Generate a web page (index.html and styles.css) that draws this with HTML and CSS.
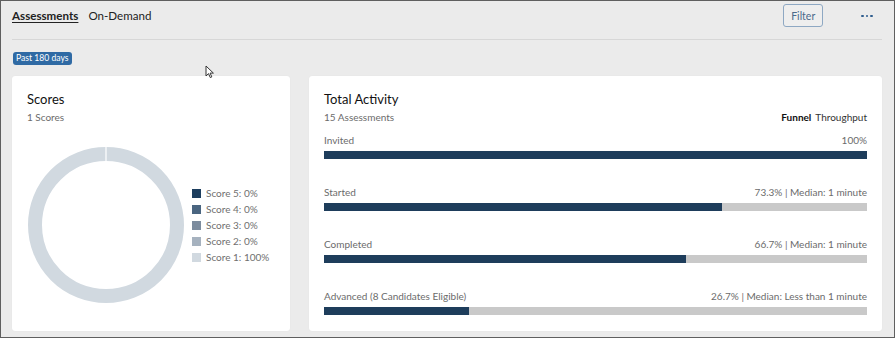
FILE: index.html
```html
<!DOCTYPE html>
<html lang="en">
<head>
  <meta charset="UTF-8">
  <title>Assessments</title>
  <link rel="stylesheet" href="styles.css">
</head>
<body>
  <div class="page">
    <div class="topbar">
      <nav class="tabs">
        <a href="#" class="tab active">Assessments</a>
        <a href="#" class="tab">On-Demand</a>
      </nav>
      <div class="actions">
        <button class="btn-filter">Filter</button>
        <button class="btn-more" aria-label="More">
          <span></span><span></span><span></span>
        </button>
      </div>
    </div>

    <div class="range">
      <span class="badge">Past 180 days</span>
    </div>

    <div class="cards">
      <section class="card">
        <h2 class="card-title">Scores</h2>
        <p class="card-sub">1 Scores</p>
        <div class="scores">
          <svg class="donut" width="156" height="156" viewBox="0 0 156 156">
            <circle cx="78" cy="78" r="71" fill="none" stroke="#d1d9e0" stroke-width="14"/>
            <line x1="78" y1="0" x2="78" y2="15" stroke="#fff" stroke-width="1.2"/>
          </svg>
          <ul class="legend">
            <li><i class="sw s5"></i>Score 5: 0%</li>
            <li><i class="sw s4"></i>Score 4: 0%</li>
            <li><i class="sw s3"></i>Score 3: 0%</li>
            <li><i class="sw s2"></i>Score 2: 0%</li>
            <li><i class="sw s1"></i>Score 1: 100%</li>
          </ul>
        </div>
      </section>

      <section class="card">
        <h2 class="card-title">Total Activity</h2>
        <div class="sub-row">
          <p class="card-sub">15 Assessments</p>
          <div class="toggle">
            <span class="toggle-on">Funnel</span>
            <span>Throughput</span>
          </div>
        </div>

        <div class="funnel">
          <div class="stage">
            <div class="stage-head"><span>Invited</span><span>100%</span></div>
            <div class="track"><div class="fill" style="width: 100%"></div></div>
          </div>
          <div class="stage">
            <div class="stage-head"><span>Started</span><span>73.3% | Median: 1 minute</span></div>
            <div class="track"><div class="fill" style="width: 73.3%"></div></div>
          </div>
          <div class="stage">
            <div class="stage-head"><span>Completed</span><span>66.7% | Median: 1 minute</span></div>
            <div class="track"><div class="fill" style="width: 66.7%"></div></div>
          </div>
          <div class="stage">
            <div class="stage-head"><span>Advanced (8 Candidates Eligible)</span><span>26.7% | Median: Less than 1 minute</span></div>
            <div class="track"><div class="fill" style="width: 26.7%"></div></div>
          </div>
        </div>
      </section>
    </div>

    <svg class="cursor" width="10" height="14" viewBox="0 0 10 14">
      <path d="M1 1 L1 11 L3.5 8.6 L5.3 12.6 L6.8 11.9 L5.1 8.1 L8.4 8.1 Z" fill="#fff" stroke="#333" stroke-width="1"/>
    </svg>
  </div>
</body>
</html>
```

FILE: styles.css
```css
html, body {
  margin: 0;
  padding: 0;
}
body {
  font-family: Lato, 'Open Sans', sans-serif;
  color: #333;
}
.page {
  position: relative;
  width: 895px;
  height: 338px;
  box-sizing: border-box;
  border: 1px solid #5f5f5f;
  background-color: #ebebeb;
  padding: 0 12px 0 11px;
}
.topbar {
  display: flex;
  justify-content: space-between;
  align-items: flex-start;
  height: 38px;
  border-bottom: 1px solid #d7d7d7;
}
.tabs {
  display: flex;
  gap: 10px;
  padding-top: 7px;
}
.tab {
  font-size: 11.6px;
  line-height: 16px;
  color: #222;
  text-decoration: none;
}
.tab.active {
  font-weight: 700;
  text-decoration: underline;
  text-underline-offset: 2px;
}
.actions {
  display: flex;
  align-items: center;
  gap: 38px;
  padding-top: 3px;
  padding-right: 9px;
}
.btn-filter {
  width: 40px;
  height: 23px;
  border: 1px solid #8ea8c3;
  border-radius: 3px;
  background: #eeeeee;
  color: #4b6a8b;
  font-family: inherit;
  font-size: 10.5px;
  padding: 0;
}
.btn-more {
  display: flex;
  gap: 2px;
  border: none;
  background: none;
  padding: 0;
  margin-top: 1px;
}
.btn-more span {
  width: 2.6px;
  height: 2.6px;
  border-radius: 50%;
  background-color: #2e5d8e;
}
.range {
  display: flex;
  padding: 12px 0 11px 1px;
  height: 13px;
}
.badge {
  display: block;
  background-color: #2f6aa4;
  color: #fff;
  font-size: 8.6px;
  line-height: 13px;
  padding: 0 3px;
  border-radius: 3px;
}
.cards {
  display: grid;
  grid-template-columns: 278px 1fr;
  gap: 19px;
}
.card {
  background-color: #fff;
  border-radius: 3px;
  height: 255px;
  box-sizing: border-box;
  padding: 14px 15px;
  box-shadow: 0 0 1px rgba(0, 0, 0, 0.08);
}
.card-title {
  margin: 0;
  font-size: 13px;
  line-height: 18px;
  font-weight: 400;
  color: #111;
}
.card-sub {
  margin: 2px 0 0;
  font-size: 10px;
  line-height: 14px;
  color: #6b6b6b;
}
.scores {
  display: flex;
  align-items: center;
  margin-top: 23px;
  padding-left: 1px;
}
.donut {
  display: block;
  flex: none;
}
.legend {
  list-style: none;
  margin: 0 0 0 8px;
  padding: 0;
  white-space: nowrap;
}
.legend li {
  display: flex;
  align-items: center;
  height: 16px;
  font-size: 10px;
  color: #6f6f6f;
}
.sw {
  width: 9px;
  height: 9px;
  margin-right: 5px;
}
.s5 { background-color: #1d3e5e; }
.s4 { background-color: #4a6580; }
.s3 { background-color: #7c8c9e; }
.s2 { background-color: #a6b2bf; }
.s1 { background-color: #d1d9e0; }
.sub-row {
  display: flex;
  justify-content: space-between;
  align-items: flex-end;
}
.toggle {
  display: flex;
  gap: 4px;
  font-size: 10px;
  line-height: 14px;
  color: #333;
}
.toggle-on {
  font-weight: 700;
  color: #111;
}
.funnel {
  margin-top: 9px;
  display: flex;
  flex-direction: column;
  gap: 26px;
}
.stage-head {
  display: flex;
  justify-content: space-between;
  font-size: 10px;
  line-height: 14px;
  color: #6b6b6b;
  margin-bottom: 4px;
}
.track {
  height: 8px;
  background-color: #c9c9c9;
}
.fill {
  height: 100%;
  background-color: #1e3d5b;
}
.cursor {
  position: absolute;
  left: 204px;
  top: 64px;
}
```
